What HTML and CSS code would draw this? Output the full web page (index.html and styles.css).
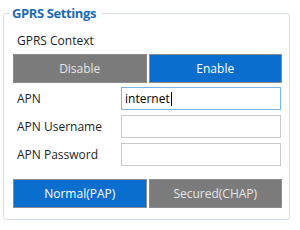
FILE: index.html
```html
<!DOCTYPE html>
<html lang="en">
<head>
    <meta charset="UTF-8">
    <title>GPRS Settings</title>

    <link rel="stylesheet" href="styles.css">
</head>
<body>

    <fieldset class="group">
        <legend>GPRS Settings</legend>

        <div class="context">GPRS Context</div>

        <div class="toggle">
            <div class="btn off">Disable</div>
            <div class="btn on">Enable</div>
        </div>

        <div class="rows">
            <div class="row">
                <label>APN</label>
                <div class="field focused">internet<span class="caret"></span></div>
            </div>
            <div class="row">
                <label>APN Username</label>
                <div class="field"></div>
            </div>
            <div class="row">
                <label>APN Password</label>
                <div class="field"></div>
            </div>
        </div>

        <div class="toggle auth">
            <div class="btn on">Normal(PAP)</div>
            <div class="btn off">Secured(CHAP)</div>
        </div>
    </fieldset>

</body>
</html>
```

FILE: styles.css
```css
html, body{
    height:100%;
}

body{
    margin: 0;
    padding-top: 5px;
    background: white;
    font-family: "Open Sans", "Noto Sans", sans-serif;
    font-size: 12px;
    color: #1e1e1e;
}

.group{
    margin: 0 10px 0 3px;
    padding: 0 7px 11px 9px;
    border: 1px solid #d5dde4;
    border-radius: 3px;
}

legend{
    margin-left: -4px;
    padding: 0 6px 0 3px;
    font-size: 13px;
    font-weight: bold;
    line-height: 16px;
    letter-spacing: -0.4px;
    color: #1b6bb4;
}

.context{
    height: 20px;
    line-height: 20px;
    margin-top: 10px;
    padding-left: 4px;
}

.toggle{
    display: grid;
    grid-template-columns: 1fr 1fr;
    gap: 2px;
    margin-top: 3px;
}

.btn{
    height: 27px;
    line-height: 27px;
    text-align: center;
    border: 1px solid #8c8c8c;
}

.btn.on{
    background: #0a6ecf;
    color: white;
}

.btn.off{
    background: #7b7b7b;
    color: #e6e6e6;
}

.rows{
    display: flex;
    flex-direction: column;
    gap: 5px;
    margin-top: 4px;
}

.row{
    display: flex;
    align-items: center;
}

label{
    width: 104px;
    padding-left: 4px;
}

.field{
    flex: 1;
    height: 21px;
    line-height: 21px;
    padding-left: 3px;
    border: 1px solid #c9c9c9;
    color: black;
    margin-right: 1px;
}

.field.focused{
    border-color: #7fb4e8;
}

.caret{
    display: inline-block;
    width: 1px;
    height: 14px;
    margin-left: 1px;
    vertical-align: -3px;
    background: black;
}

.auth{
    margin-top: 13px;
}
```
